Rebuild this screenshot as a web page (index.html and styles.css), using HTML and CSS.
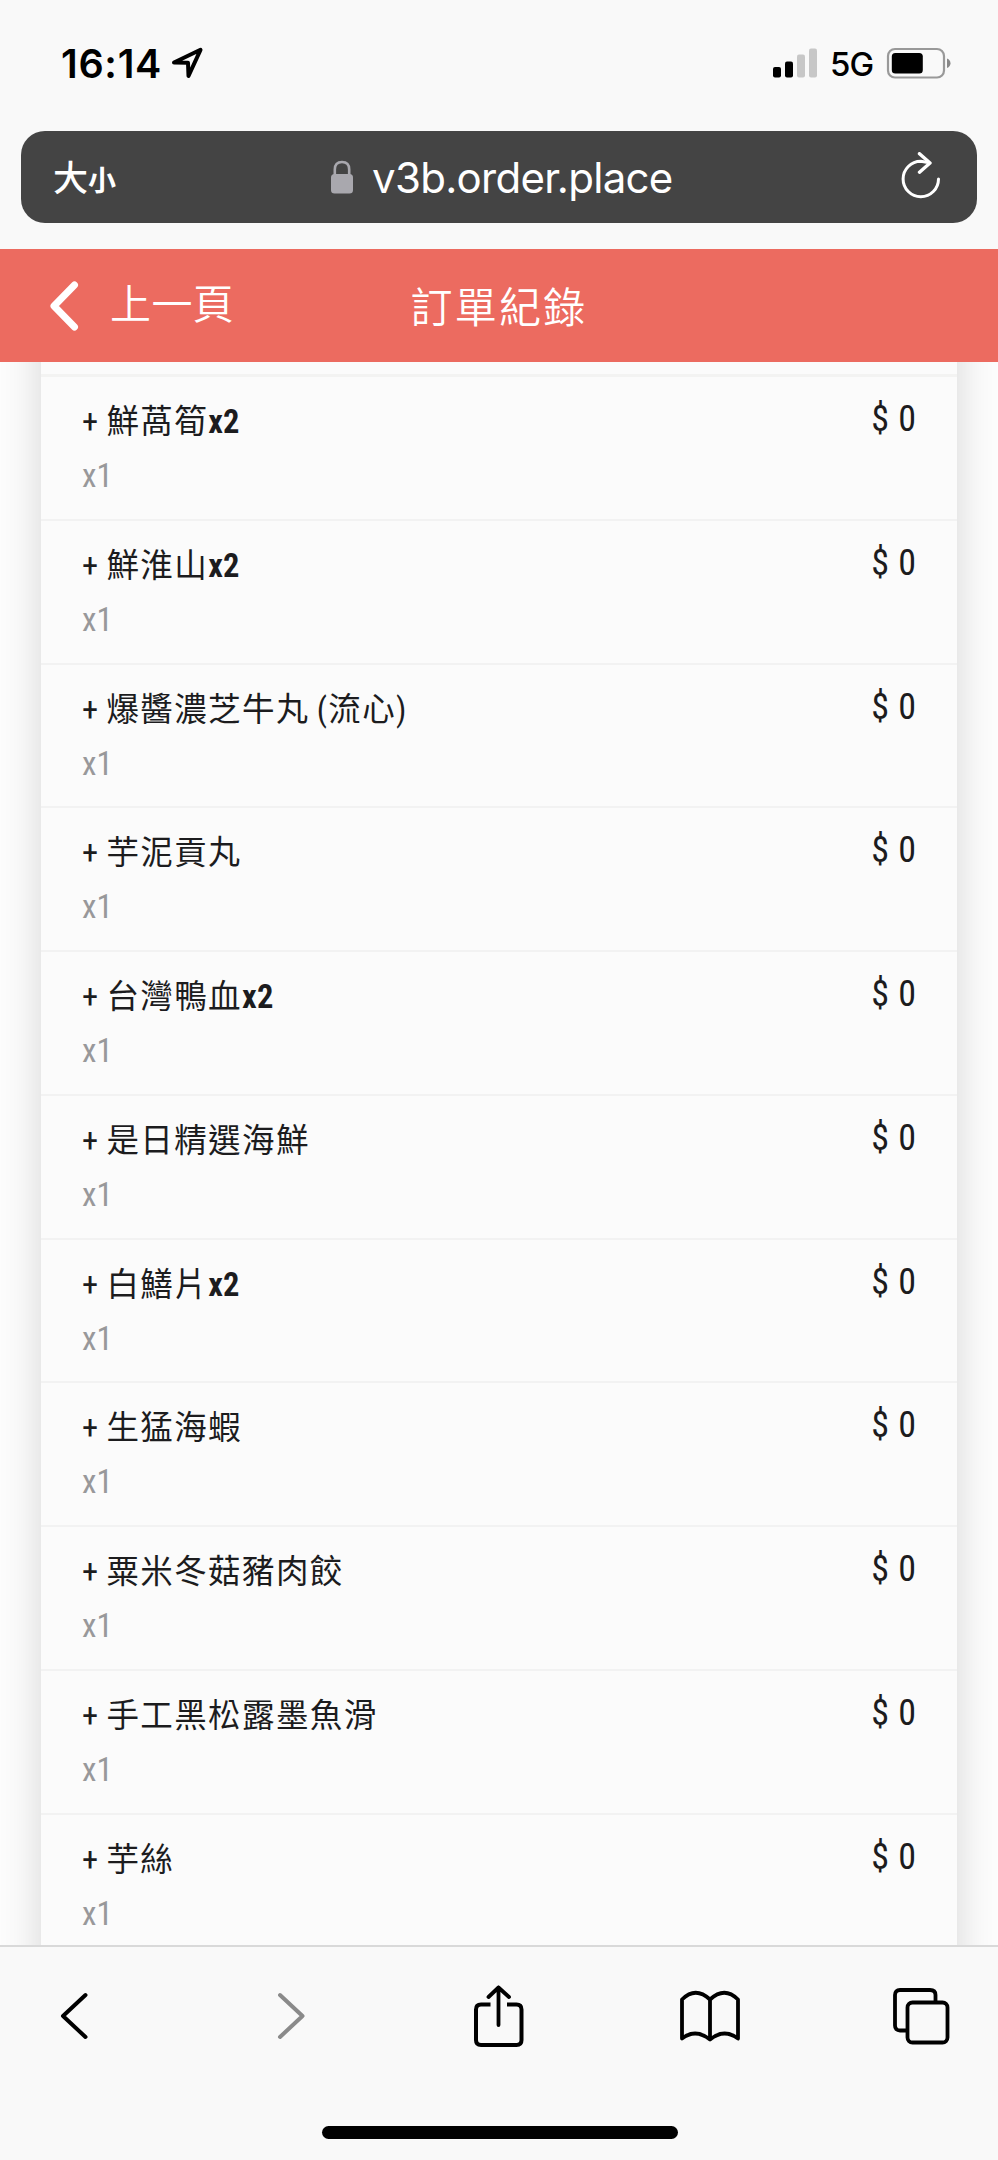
FILE: index.html
```html
<!DOCTYPE html>
<html lang="zh-Hant">
  <head>
    <meta charset="utf-8">
    <title>訂單紀錄</title>
    <link rel="stylesheet" href="styles.css">
  </head>

  <body>
    <div class="status-bar">
      <span class="time">16:14</span>
      <svg class="location" width="34" height="34" viewBox="0 0 34 34">
        <path d="M4 16.5 L30.5 3.8 L18.5 30 L18 16.8 Z" fill="none" stroke="#000" stroke-width="4" stroke-linejoin="round"/>
      </svg>
      <svg class="signal" width="46" height="32" viewBox="0 0 46 32">
        <rect x="1" y="20" width="8" height="10.5" rx="2"/>
        <rect x="13" y="14.5" width="8" height="16" rx="2"/>
        <rect x="25" y="7.5" width="8" height="23" rx="2" fill="#c7c7c7"/>
        <rect x="37" y="1.5" width="8" height="29" rx="2" fill="#c7c7c7"/>
      </svg>
      <span class="network">5G</span>
      <svg class="battery" width="66" height="32" viewBox="0 0 66 32">
        <rect x="2" y="2" width="56" height="28.5" rx="7" fill="none" stroke="#999" stroke-width="2.2"/>
        <rect x="5.8" y="6" width="31" height="20.5" rx="3.5"/>
        <path d="M61 11.5 Q64.5 13 64.5 16.2 Q64.5 19.5 61 21 Z" fill="#888"/>
      </svg>
    </div>

    <div class="address-bar">
      <span class="text-size">大<small>小</small></span>
      <div class="address">
        <svg width="24" height="34" viewBox="0 0 24 34">
          <rect x="1" y="14" width="22" height="19.5" rx="3.5" fill="#a9a8ae"/>
          <path d="M4.8 15 V9.5 Q4.8 2 12 2 Q19.2 2 19.2 9.5 V15" fill="none" stroke="#a9a8ae" stroke-width="2.6"/>
        </svg>
        <span class="url">v3b.order.place</span>
      </div>
      <svg class="reload" width="42" height="50" viewBox="0 0 42 50">
        <path d="M38.5 27 A17.7 17.7 0 1 1 20.8 9.3 L28 10.5" fill="none" stroke="#fff" stroke-width="3" stroke-linecap="round"/>
        <path d="M19.5 1.7 L30 11 L19.5 20.2" fill="none" stroke="#fff" stroke-width="3.4" stroke-linecap="round" stroke-linejoin="round"/>
      </svg>
    </div>

    <div class="header">
      <div class="back">
        <svg width="30" height="50" viewBox="0 0 30 50">
          <path d="M25.5 4 L5 25 L25.5 46" fill="none" stroke="#fff" stroke-width="7" stroke-linecap="round" stroke-linejoin="round"/>
        </svg>
        <span>上一頁</span>
      </div>
      <h1>訂單紀錄</h1>
    </div>

    <div class="content">
      <div class="card">
        <div class="card-top"></div>
        <div class="item">
          <div><div class="name">+ 鮮萵筍<b>x2</b></div><div class="qty">x1</div></div>
          <div class="price">$ 0</div>
        </div>
        <div class="item">
          <div><div class="name">+ 鮮淮山<b>x2</b></div><div class="qty">x1</div></div>
          <div class="price">$ 0</div>
        </div>
        <div class="item">
          <div><div class="name">+ 爆醬濃芝牛丸 (流心)</div><div class="qty">x1</div></div>
          <div class="price">$ 0</div>
        </div>
        <div class="item">
          <div><div class="name">+ 芋泥貢丸</div><div class="qty">x1</div></div>
          <div class="price">$ 0</div>
        </div>
        <div class="item">
          <div><div class="name">+ 台灣鴨血<b>x2</b></div><div class="qty">x1</div></div>
          <div class="price">$ 0</div>
        </div>
        <div class="item">
          <div><div class="name">+ 是日精選海鮮</div><div class="qty">x1</div></div>
          <div class="price">$ 0</div>
        </div>
        <div class="item">
          <div><div class="name">+ 白鱔片<b>x2</b></div><div class="qty">x1</div></div>
          <div class="price">$ 0</div>
        </div>
        <div class="item">
          <div><div class="name">+ 生猛海蝦</div><div class="qty">x1</div></div>
          <div class="price">$ 0</div>
        </div>
        <div class="item">
          <div><div class="name">+ 粟米冬菇豬肉餃</div><div class="qty">x1</div></div>
          <div class="price">$ 0</div>
        </div>
        <div class="item">
          <div><div class="name">+ 手工黑松露墨魚滑</div><div class="qty">x1</div></div>
          <div class="price">$ 0</div>
        </div>
        <div class="item">
          <div><div class="name">+ 芋絲</div><div class="qty">x1</div></div>
          <div class="price">$ 0</div>
        </div>
      </div>
    </div>

    <div class="toolbar">
      <div class="buttons">
        <svg width="30" height="50" viewBox="0 0 30 50">
          <path d="M25.5 4 L3 25 L25.5 46" fill="none" stroke="#000" stroke-width="4" stroke-linecap="round" stroke-linejoin="round"/>
        </svg>
        <svg width="30" height="50" viewBox="0 0 30 50">
          <path d="M4 4 L26.5 25 L4 46" fill="none" stroke="#8a8a8a" stroke-width="4" stroke-linecap="round" stroke-linejoin="round"/>
        </svg>
        <svg width="52" height="64" viewBox="0 0 52 64">
          <path d="M17.5 20.5 H8 Q3 20.5 3 25.5 V56 Q3 61 8 61 H43.5 Q48.5 61 48.5 56 V25.5 Q48.5 20.5 43.5 20.5 H34" fill="none" stroke="#000" stroke-width="4"/>
          <path d="M25.5 41 V3.5 M15.5 13 L25.5 3.5 L36 13" fill="none" stroke="#000" stroke-width="3.8" stroke-linecap="round" stroke-linejoin="round"/>
        </svg>
        <svg width="62" height="52" viewBox="0 0 62 52">
          <path d="M31 9.5 Q16.5 -4 3 9.5 V48.5 Q16.5 38 31 49.5 Q45 38 59 48.5 V9.5 Q45.5 -4 31 9.5 V49.5" fill="none" stroke="#000" stroke-width="3.8" stroke-linejoin="round"/>
        </svg>
        <svg width="58" height="58" viewBox="0 0 58 58">
          <path d="M15 43.5 H8 Q3 43.5 3 38.5 V8 Q3 3 8 3 H38 Q43.5 3 43.5 8 V15" fill="none" stroke="#000" stroke-width="3.8"/>
          <rect x="15.5" y="15.5" width="40" height="40" rx="5" fill="none" stroke="#000" stroke-width="3.8"/>
        </svg>
      </div>
      <div class="home-indicator"></div>
    </div>
  </body>
</html>
```

FILE: styles.css
```css
* {
  box-sizing: border-box;
}
body {
  display: flex;
  flex-direction: column;
  height: 2160px;
  margin: 0;
  overflow: hidden;
  background-color: #f9f9f9;
  font-family: Roboto, "Noto Sans CJK TC", sans-serif;
}
svg {
  display: block;
  flex-shrink: 0;
}
.status-bar {
  display: flex;
  align-items: center;
  height: 131px;
  padding: 0 46px 5px 61px;
  font-family: Inter, sans-serif;
}
.time {
  width: 109px;
  padding-top: 1px;
  font-size: 39.5px;
  font-weight: 600;
  letter-spacing: 0.7px;
}
.signal {
  margin-left: auto;
}
.network {
  width: 56px;
  margin-left: 12px;
  padding-top: 2px;
  font-size: 33px;
  font-weight: 500;
  letter-spacing: -1px;
}
.address-bar {
  display: flex;
  align-items: center;
  height: 92px;
  margin: 0 21px;
  padding: 0 35px 0 32px;
  border-radius: 24px;
  background-color: #444;
  color: #fff;
}
.text-size {
  width: 277px;
  padding-bottom: 4px;
  font-family: "Noto Sans CJK TC", sans-serif;
  font-size: 35px;
  font-weight: 500;
}
.text-size small {
  font-size: 28px;
  font-weight: 700;
}
.address {
  display: flex;
  align-items: center;
  gap: 18px;
}
.url {
  font-family: Inter, sans-serif;
  font-size: 42px;
  letter-spacing: -0.7px;
}
.reload {
  margin-left: auto;
}
.header {
  display: grid;
  grid-template-columns: 1fr auto 1fr;
  align-items: center;
  height: 113px;
  margin-top: 26px;
  padding: 0 49px;
  background-color: #ec6b60;
  color: #fff;
}
.back {
  display: flex;
  align-items: center;
  gap: 31px;
  font-size: 41px;
  font-weight: 350;
}
.back span {
  padding-bottom: 9px;
  letter-spacing: 0.4px;
}
h1 {
  margin: 0;
  padding-bottom: 3px;
  font-size: 42px;
  font-weight: 350;
  letter-spacing: 2.2px;
}
.content {
  flex: 1;
  overflow: hidden;
  padding: 0 41px;
  background-color: #fdfdfd;
}
/* top of the card is scrolled under the header */
.card {
  height: 1700px;
  margin-top: -50px;
  padding-top: 50px;
  background-color: #fbfbfb;
  box-shadow: 0 0 40px rgba(0, 0, 0, 0.16);
}
.card-top {
  height: 15px;
  border-bottom: 3px solid #f3f3f2;
}
.item {
  display: flex;
  justify-content: space-between;
  height: 143.75px;
  padding: 21px 41px 0 41px;
  border-bottom: 2px solid #f2f2f2;
  color: #1c1c1e;
}
.name,
.qty,
.price {
  font-stretch: 75%;
  white-space: pre;
}
.name {
  height: 48px;
  font-size: 32.5px;
  line-height: 48px;
  letter-spacing: 1.4px;
  word-spacing: -2px;
}
.name b {
  letter-spacing: 0.3px;
}
.qty {
  padding-top: 7px;
  font-size: 33px;
  line-height: 46px;
  color: #98989a;
}
.price {
  font-size: 36px;
  line-height: 42px;
  word-spacing: 1px;
}
.toolbar {
  height: 215px;
  padding: 36px 48px 0 60px;
  border-top: 2px solid #d9d9d9;
}
.buttons {
  display: grid;
  grid-template-columns: 216px 197px 206px 213px auto;
  align-items: center;
  height: 65px;
}
.home-indicator {
  width: 356px;
  height: 13px;
  margin: 78px 0 0 262px;
  border-radius: 7px;
  background-color: #000;
}
```
